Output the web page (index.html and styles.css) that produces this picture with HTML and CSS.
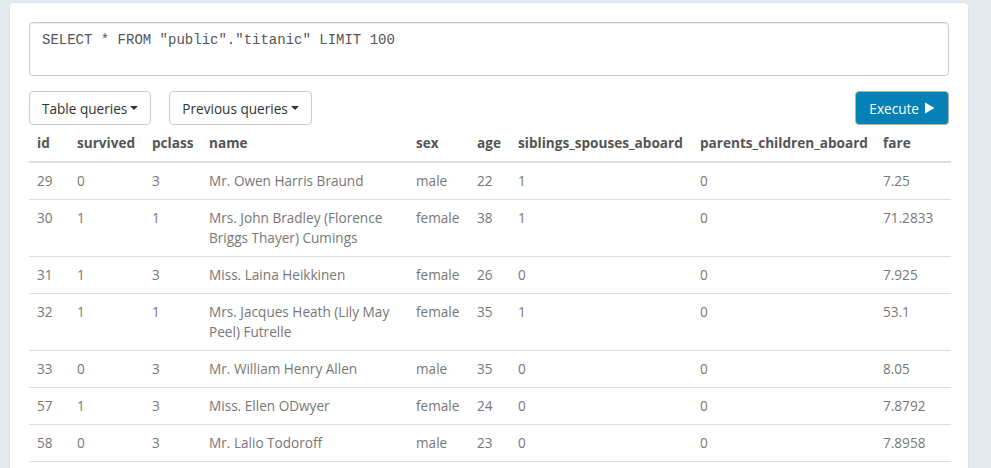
FILE: index.html
```html
<!DOCTYPE html>
<html>
<head>
<meta charset="utf-8">
<link rel="stylesheet" href="styles.css">
</head>
<body>
<div class="panel">
  <div class="editor">SELECT * FROM "public"."titanic" LIMIT 100</div>
  <div class="toolbar">
    <button class="btn">Table queries <span class="caret"></span></button>
    <button class="btn">Previous queries <span class="caret"></span></button>
    <span class="spacer"></span>
    <button class="btn btn-primary">Execute <svg class="play" width="11" height="12" viewBox="0 0 11 12"><path d="M1 0.5 L10.5 6 L1 11.5 Z" fill="#fff"/></svg></button>
  </div>
  <table class="results">
    <colgroup>
      <col class="c-id"><col class="c-surv"><col class="c-pc"><col class="c-name"><col class="c-sex"><col class="c-age"><col class="c-sib"><col class="c-par"><col class="c-fare">
    </colgroup>
    <thead>
      <tr><th>id</th><th>survived</th><th>pclass</th><th>name</th><th>sex</th><th>age</th><th>siblings_spouses_aboard</th><th>parents_children_aboard</th><th>fare</th></tr>
    </thead>
    <tbody>
      <tr><td>29</td><td>0</td><td>3</td><td>Mr. Owen Harris Braund</td><td>male</td><td>22</td><td>1</td><td>0</td><td>7.25</td></tr>
      <tr><td>30</td><td>1</td><td>1</td><td>Mrs. John Bradley (Florence Briggs Thayer) Cumings</td><td>female</td><td>38</td><td>1</td><td>0</td><td>71.2833</td></tr>
      <tr><td>31</td><td>1</td><td>3</td><td>Miss. Laina Heikkinen</td><td>female</td><td>26</td><td>0</td><td>0</td><td>7.925</td></tr>
      <tr><td>32</td><td>1</td><td>1</td><td>Mrs. Jacques Heath (Lily May Peel) Futrelle</td><td>female</td><td>35</td><td>1</td><td>0</td><td>53.1</td></tr>
      <tr><td>33</td><td>0</td><td>3</td><td>Mr. William Henry Allen</td><td>male</td><td>35</td><td>0</td><td>0</td><td>8.05</td></tr>
      <tr><td>57</td><td>1</td><td>3</td><td>Miss. Ellen ODwyer</td><td>female</td><td>24</td><td>0</td><td>0</td><td>7.8792</td></tr>
      <tr><td>58</td><td>0</td><td>3</td><td>Mr. Lalio Todoroff</td><td>male</td><td>23</td><td>0</td><td>0</td><td>7.8958</td></tr>
    </tbody>
  </table>
</div>
</body>
</html>
```
FILE: styles.css
```css
html, body {
  margin: 0;
  padding: 0;
}
body {
  background: #e4ebef;
  font-family: "Open Sans", "Liberation Sans", sans-serif;
  font-size: 13.6px;
  color: #777;
  height: 468px;
  overflow: hidden;
}
.panel {
  margin: 2px 0 0 9px;
  width: 960px;
  box-sizing: border-box;
  background: #fff;
  border: 1px solid #dce3e8;
  border-radius: 4px;
  padding: 19px 19px 20px 19px;
  height: 480px;
}
.editor {
  height: 54px;
  box-sizing: border-box;
  border: 1px solid #ccc;
  border-radius: 4px;
  padding: 9px 12px;
  font-family: "Liberation Mono", monospace;
  font-size: 14px;
  line-height: 16px;
  color: #555;
  box-shadow: inset 0 1px 1px rgba(0,0,0,0.075);
}
.toolbar {
  display: flex;
  gap: 18px;
  margin-top: 15px;
}
.spacer { flex: 1; }
.btn {
  font-family: inherit;
  font-size: 13.6px;
  height: 34px;
  padding: 0 12px;
  background: #fff;
  border: 1px solid #ccc;
  border-radius: 4px;
  color: #333;
  display: flex;
  align-items: center;
  gap: 3px;
}
.caret {
  display: inline-block;
  width: 0;
  height: 0;
  border-top: 4px solid #333;
  border-left: 4px solid transparent;
  border-right: 4px solid transparent;
}
.btn-primary {
  background: #0581b6;
  border-color: #a8bba0;
  color: #fff;
  padding: 0 13px;
  gap: 5px;
}
.results {
  width: 922px;
  border-collapse: collapse;
  table-layout: fixed;
}
.c-id { width: 40px; }
.c-surv { width: 75px; }
.c-pc { width: 57px; }
.c-name { width: 207px; }
.c-sex { width: 61px; }
.c-age { width: 41px; }
.c-sib { width: 182px; }
.c-par { width: 183px; }
.c-fare { width: 76px; }
.results th, .results td {
  padding: 8px;
  line-height: 20px;
  text-align: left;
  vertical-align: top;
  white-space: nowrap;
}
.results td:nth-child(4) { white-space: normal; }
.results th {
  font-weight: bold;
  color: #555;
  border-bottom: 2px solid #ddd;
}
.results td {
  border-bottom: 1px solid #ddd;
}
```
